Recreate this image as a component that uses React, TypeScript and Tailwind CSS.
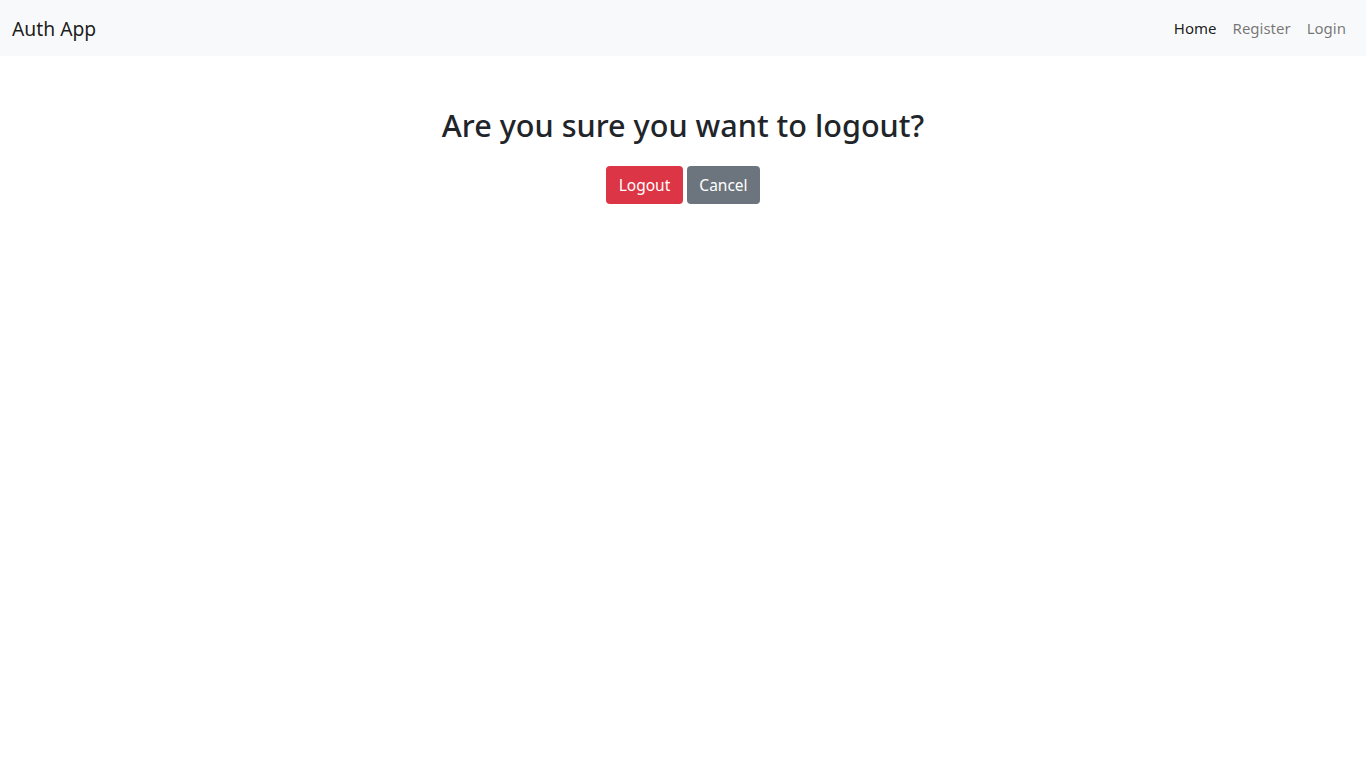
import React from "react";

export default function App() {
  const font = { fontFamily: '"Noto Sans", "Open Sans", sans-serif' };
  return (
    <div className="min-h-screen bg-white text-[#212529]" style={font}>
      <nav className="flex h-[56px] items-center justify-between bg-[#f8f9fa] px-3">
        <a className="pt-[6px] pb-[4px] text-[19.3px] leading-[30px] text-black/90">Auth App</a>
        <ul className="flex items-center text-[15px] leading-6">
          <li><a className="block px-2 py-2 text-black/90">Home</a></li>
          <li><a className="block px-2 py-2 text-black/55">Register</a></li>
          <li><a className="block px-2 py-2 text-black/55">Login</a></li>
        </ul>
      </nav>
      <main className="mt-[50px] flex flex-col items-center">
        <h2 className="mb-[22px] text-[30.6px] font-medium leading-[38px]">Are you sure you want to logout?</h2>
        <div className="flex gap-1">
          <button className="h-[38px] w-[77px] rounded bg-[#dc3545] pt-[2px] text-[15.5px] text-white">Logout</button>
          <button className="h-[38px] w-[73px] rounded bg-[#6c757d] pt-[2px] text-[15.5px] text-white">Cancel</button>
        </div>
      </main>
    </div>
  );
}
